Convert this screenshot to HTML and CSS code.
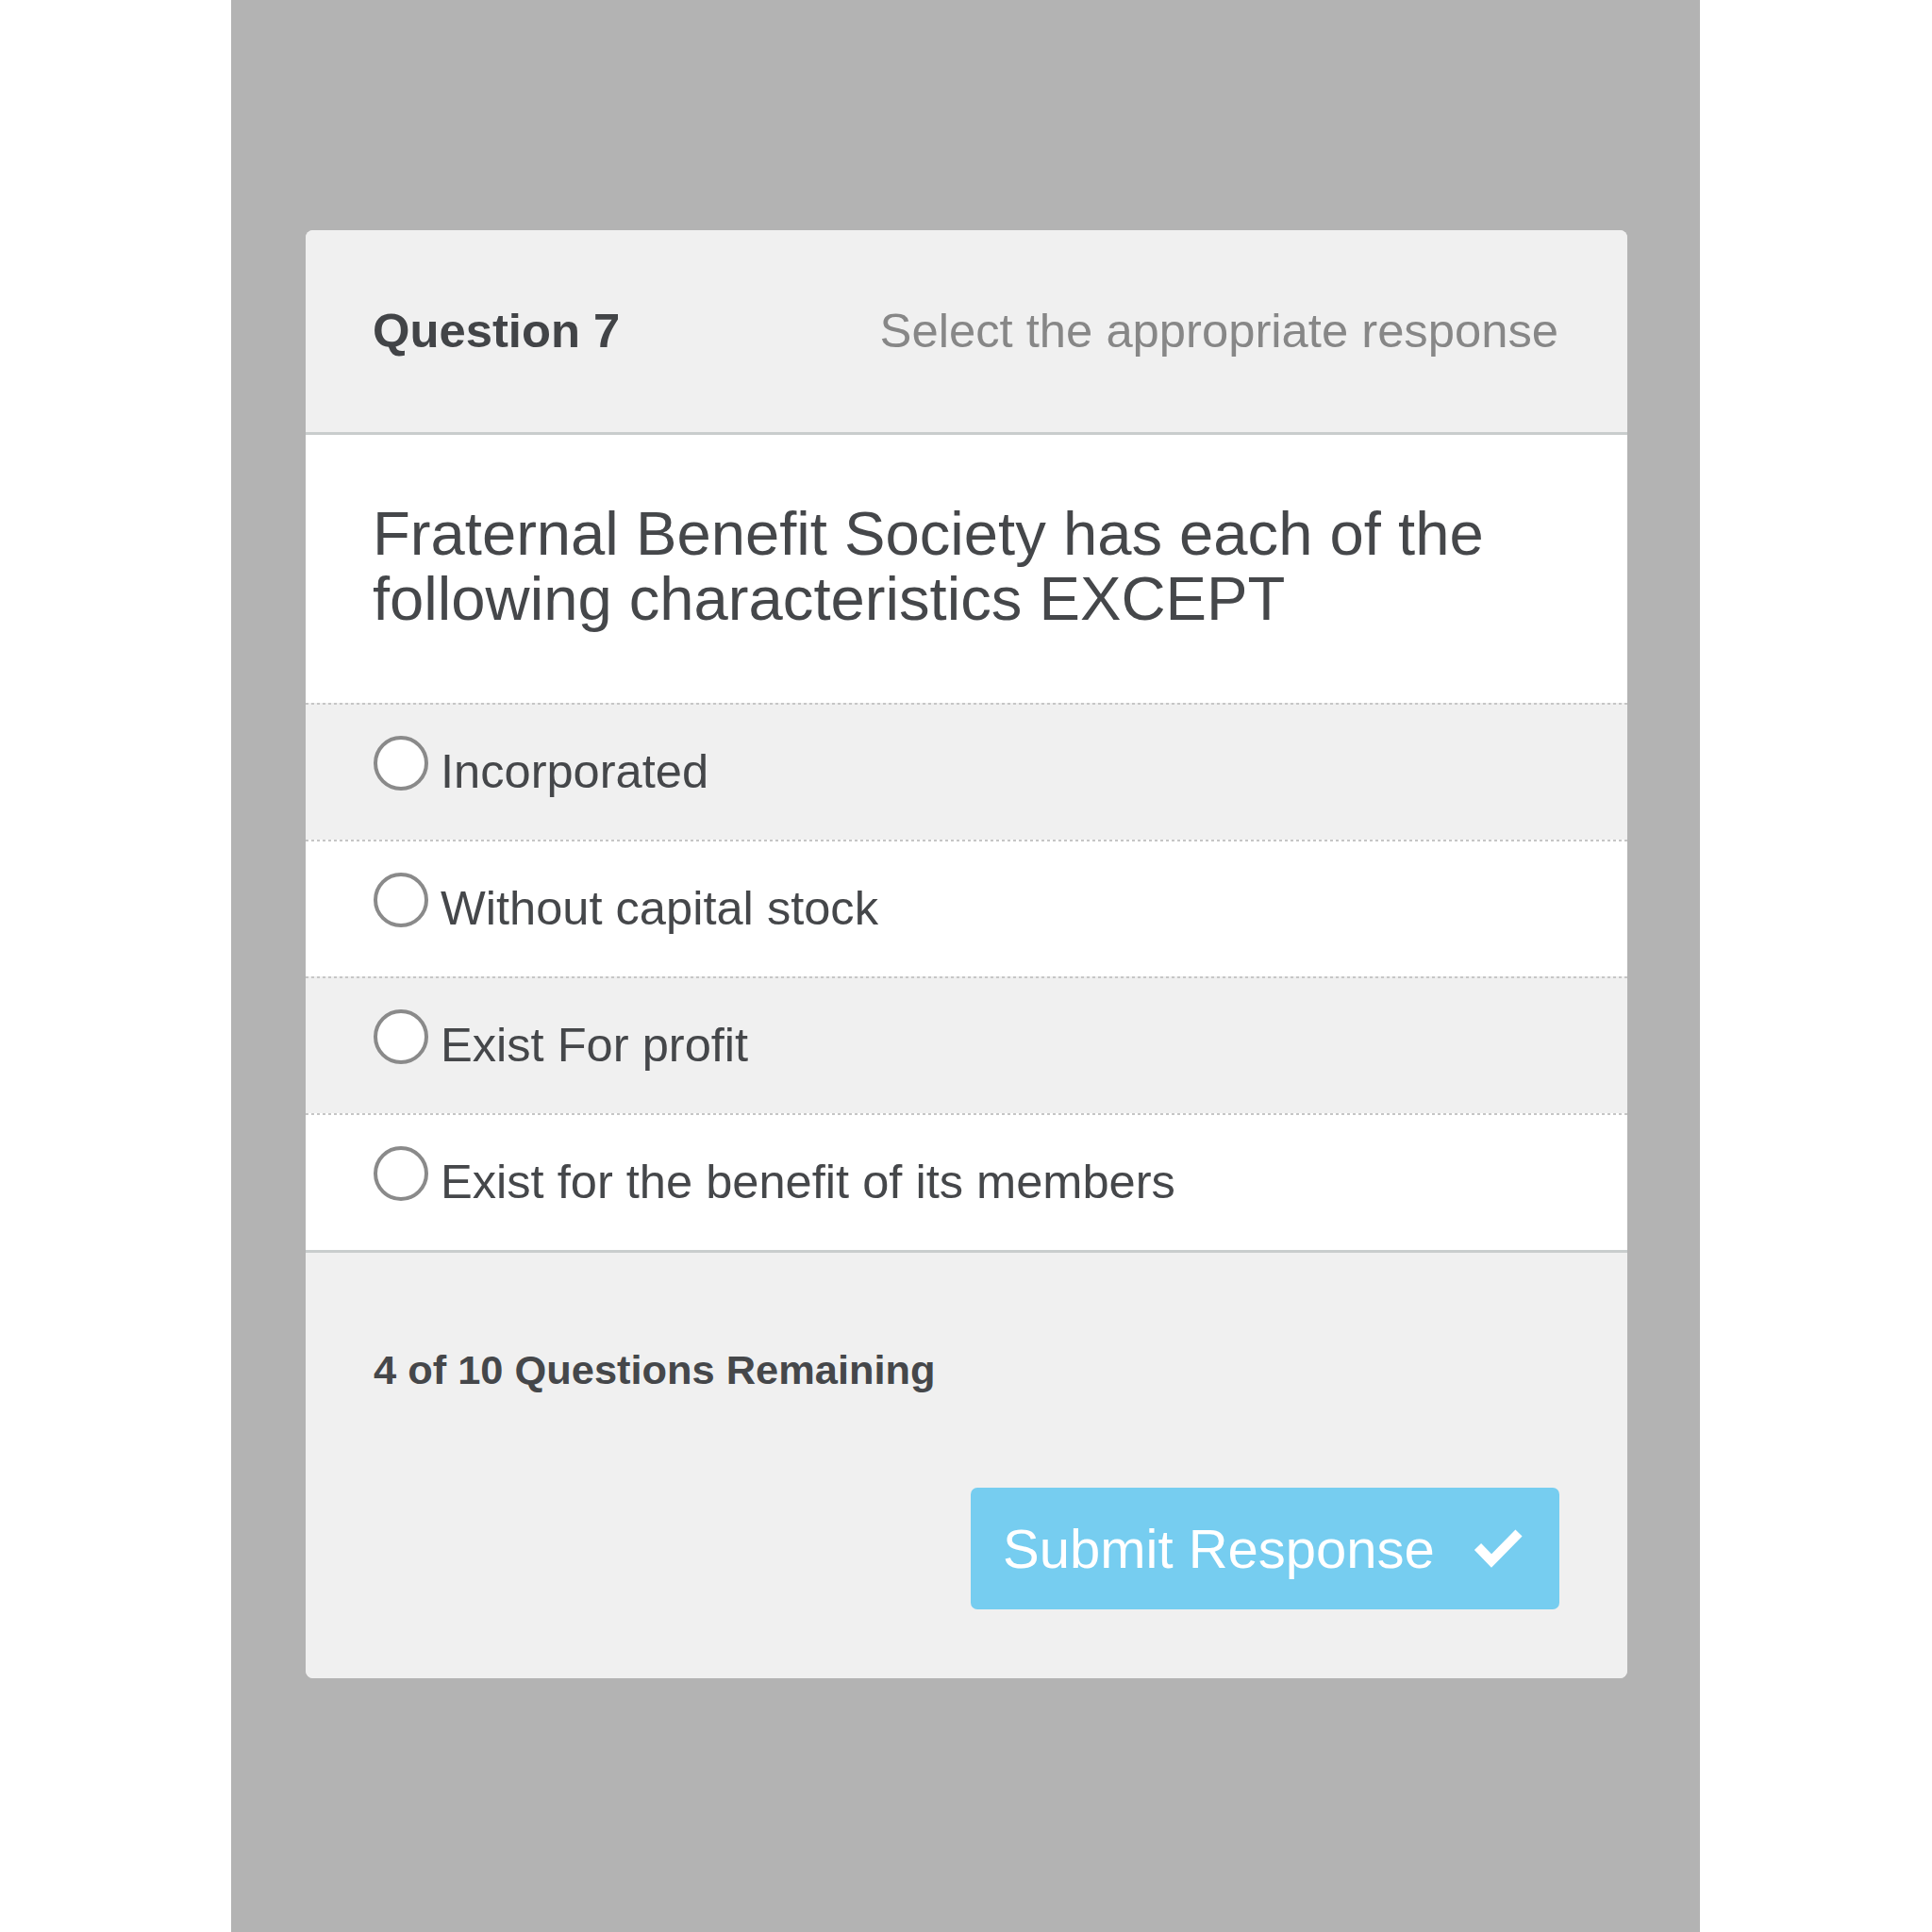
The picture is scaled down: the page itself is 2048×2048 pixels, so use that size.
FILE: index.html
```html
<!DOCTYPE html>
<html lang="en">
<head>
<meta charset="utf-8">
<title>Question 7</title>
<link rel="stylesheet" href="styles.css">
</head>
<body>
<div class="frame">
  <div class="card">
    <div class="card-header">
      <div class="q-number">Question 7</div>
      <div class="q-hint">Select the appropriate response</div>
    </div>
    <div class="q-text">Fraternal Benefit Society has each of the following characteristics EXCEPT</div>
    <div class="options">
      <label class="option shaded"><span class="radio"></span><span class="option-label">Incorporated</span></label>
      <label class="option"><span class="radio"></span><span class="option-label">Without capital stock</span></label>
      <label class="option shaded"><span class="radio"></span><span class="option-label">Exist For profit</span></label>
      <label class="option"><span class="radio"></span><span class="option-label">Exist for the benefit of its members</span></label>
    </div>
    <div class="card-footer">
      <div class="remaining">4 of 10 Questions Remaining</div>
      <button class="submit" type="button">
        <span class="submit-label">Submit Response</span>
        <svg class="check" width="56" height="46" viewBox="0 0 56 46" aria-hidden="true">
          <polyline points="6.5,21.5 21,36.5 50,7" fill="none" stroke="#ffffff" stroke-width="10" stroke-linejoin="miter" stroke-linecap="butt"/>
        </svg>
      </button>
    </div>
  </div>
</div>
</body>
</html>
```

FILE: styles.css
```css
html, body {
  margin: 0;
  padding: 0;
  background: #ffffff;
}

body {
  font-family: "Liberation Sans", Arial, Helvetica, sans-serif;
  color: #45474a;
}

.frame {
  width: 1557px;
  min-height: 2048px;
  margin-left: 245px;
  background: #b3b3b3;
  padding: 244px 77px 0 79px;
  box-sizing: border-box;
}

.card {
  width: 1401px;
  background: #f0f0f0;
  border-radius: 8px;
  overflow: hidden;
  display: flex;
  flex-direction: column;
}

.card-header {
  height: 214px;
  display: flex;
  align-items: center;
  justify-content: space-between;
  padding: 0 73px 0 71px;
  background: #f0f0f0;
  border-bottom: 3px solid #c9cdcd;
}

.q-number {
  font-size: 50.75px;
  font-weight: bold;
  line-height: 58px;
  color: #424447;
}

.q-hint {
  font-size: 50.75px;
  line-height: 58px;
  color: #878787;
}

.q-text {
  background: #ffffff;
  font-size: 65.2px;
  line-height: 69px;
  padding: 70px 72px 76px 71px;
  color: #45474a;
}

.options {
  display: flex;
  flex-direction: column;
}

.option {
  display: flex;
  align-items: flex-start;
  gap: 13px;
  height: 145px;
  box-sizing: border-box;
  padding: 44px 72px 0 72px;
  background-color: #ffffff;
  background-image: linear-gradient(to right, #c6c6c6 50%, transparent 50%);
  background-size: 6px 2px;
  background-repeat: repeat-x;
  background-position: 0 0;
}

.option.shaded {
  background-color: #f0f0f0;
}

.radio {
  flex: none;
  width: 58px;
  height: 58px;
  margin-top: -9px;
  box-sizing: border-box;
  border: 4.5px solid #8a8a8a;
  border-radius: 50%;
  background: #ffffff;
}

.option-label {
  font-size: 50.6px;
  line-height: 58px;
  color: #45474a;
}

.card-footer {
  border-top: 3px solid #c9cdcd;
  background: #f0f0f0;
  padding: 100px 72px 73px 72px;
  display: flex;
  flex-direction: column;
}

.remaining {
  font-size: 43.4px;
  font-weight: bold;
  line-height: 49px;
  color: #45474a;
}

.submit {
  align-self: flex-end;
  margin-top: 100px;
  width: 624px;
  height: 129px;
  border: none;
  border-radius: 7px;
  background: #76cdf0;
  color: #ffffff;
  font-family: "Liberation Sans", Arial, Helvetica, sans-serif;
  font-size: 58px;
  display: flex;
  align-items: center;
  gap: 39px;
  padding: 0 0 0 34px;
  box-sizing: border-box;
}

.submit-label {
  line-height: 66px;
}

.check {
  flex: none;
  display: block;
  margin-top: -2px;
}
```
